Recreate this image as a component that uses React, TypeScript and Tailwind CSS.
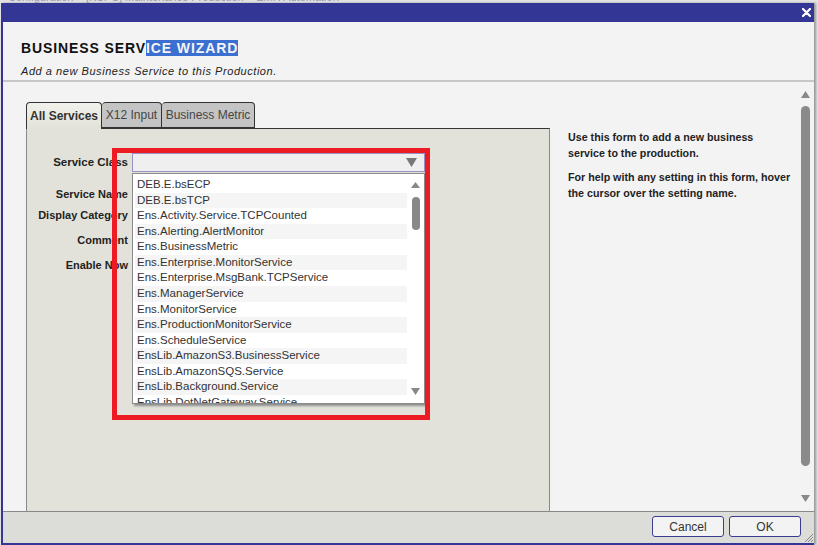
const services = [
  "DEB.E.bsECP",
  "DEB.E.bsTCP",
  "Ens.Activity.Service.TCPCounted",
  "Ens.Alerting.AlertMonitor",
  "Ens.BusinessMetric",
  "Ens.Enterprise.MonitorService",
  "Ens.Enterprise.MsgBank.TCPService",
  "Ens.ManagerService",
  "Ens.MonitorService",
  "Ens.ProductionMonitorService",
  "Ens.ScheduleService",
  "EnsLib.AmazonS3.BusinessService",
  "EnsLib.AmazonSQS.Service",
  "EnsLib.Background.Service",
  "EnsLib.DotNetGateway.Service",
];

function Arrow({ up, w, h, color }: { up?: boolean; w: number; h: number; color: string }) {
  return (
    <svg width={w} height={h} viewBox={`0 0 ${w} ${h}`} className="block">
      <polygon points={up ? `0,${h} ${w / 2},0 ${w},${h}` : `0,0 ${w},0 ${w / 2},${h}`} fill={color} />
    </svg>
  );
}

export default function App() {
  return (
    <div className="w-[818px] h-[545px] bg-[#e2e2e2] overflow-hidden flex flex-col font-['Liberation_Sans',Arial,sans-serif]">
      {/* page behind the dialog, barely visible */}
      <div className="h-[3px] overflow-hidden pl-[8px]">
        <div className="-mt-[9px] text-[11px] leading-[12px] text-[#8f9bb8] whitespace-nowrap">
          Configuration &gt; [KSPC] Maintenance Production &gt; EMR Automation
        </div>
      </div>

      <div className="ml-[1px] w-[813px] flex-1 flex flex-col bg-[#f3f3f3] border-l-2 border-b-2 border-[#333694] shadow-[2px_0_2px_#9a9a9a]">
        {/* title bar */}
        <div className="h-[19px] bg-[#333694] flex items-center justify-end pr-[3px]">
          <svg width="9" height="9" viewBox="0 0 9 9">
            <path d="M1 1 L8 8 M8 1 L1 8" stroke="#fff" strokeWidth="2.2" strokeLinecap="round" />
          </svg>
        </div>

        {/* header */}
        <div className="h-[58px] pt-[18px] pl-[18px]">
          <div className="text-[14px] leading-[16px] font-bold tracking-[0.9px] text-[#111] whitespace-nowrap">
            BUSINESS SERV<span className="bg-[#3b6fd0] text-[#f4f4f4]">ICE WIZARD</span>
          </div>
          <div className="mt-[9px] text-[11px] leading-[13px] italic tracking-[0.55px] text-[#222]">
            Add a new Business Service to this Production.
          </div>
        </div>
        <div className="h-[2px] bg-[#c6c6c6]" />

        {/* body */}
        <div className="flex-1 flex min-h-0">
          <div className="w-[547px] pl-[23px] pt-[19px] flex flex-col">
            <div className="h-[27px] flex items-end text-[12px]">
              <div className="h-[27px] w-[76px] border border-b-0 border-[#333] rounded-t-[4px] bg-gradient-to-b from-[#f2f2ec] to-[#e2e2da] font-bold text-[#333] flex items-center justify-center relative z-10 -mb-px">
                All Services
              </div>
              <div className="h-[26px] w-[60px] border border-l-0 border-[#333] rounded-t-[4px] bg-[#c4c4c4] text-[#444] flex items-center justify-center">
                X12 Input
              </div>
              <div className="h-[26px] w-[93px] border border-l-0 border-[#333] rounded-t-[4px] bg-[#c4c4c4] text-[#444] flex items-center justify-center">
                Business Metric
              </div>
            </div>

            <div className="flex-1 w-[524px] bg-[#e2e2da] border-t border-t-[#333] border-x border-x-[#888] relative">
              <div className="pt-[24px]">
                <div className="flex items-center">
                  <div className="w-[101px] text-right text-[11.5px] font-bold text-[#222]">Service Class</div>
                  <div className="ml-[4px] w-[293px] h-[19px] border border-[#9393c4] bg-[#efefef] relative flex items-center justify-end pr-[7px]">
                    <Arrow w={11} h={9} color="#777" />
                    <div className="absolute left-[-1px] top-[19px] w-[293px] h-[231px] bg-white border border-[#8a8a8a] shadow-[2px_2px_2px_#8f8f8f] overflow-hidden flex z-10">
                      <div className="w-[274px] pl-[2px] pt-[3px] shrink-0">
                        {services.map((s, i) => (
                          <div
                            key={s}
                            className={`h-[15.57px] leading-[15.57px] text-[11.5px] text-[#333] pl-[2px] whitespace-nowrap ${i % 2 === 1 ? "bg-[#f5f5f5]" : ""}`}
                          >
                            {s}
                          </div>
                        ))}
                      </div>
                      <div className="flex-1 flex flex-col items-center pt-[8px] pb-[8px]">
                        <Arrow up w={9} h={6} color="#888" />
                        <div className="mt-[9px] w-[8px] h-[33px] rounded-full bg-[#888]" />
                        <div className="flex-1" />
                        <Arrow w={9} h={7} color="#888" />
                      </div>
                    </div>
                  </div>
                </div>

                <div className="w-[101px] text-right text-[11px] leading-[14px] font-bold text-[#222]">
                  <div className="mt-[15px]">Service Name</div>
                  <div className="mt-[7px]">Display Category</div>
                  <div className="mt-[11px]">Comment</div>
                  <div className="mt-[11px]">Enable Now</div>
                </div>
              </div>

              {/* annotation */}
              <div className="absolute left-[85px] top-[19px] w-[318px] h-[272px] border-[5px] border-[#ed1c24] z-20 pointer-events-none" />
            </div>
          </div>

          <div className="flex-1 pl-[18px] pt-[47px] text-[10.7px] leading-[16px] font-bold text-[#222] whitespace-nowrap">
            <p>
              Use this form to add a new business
              <br />
              service to the production.
            </p>
            <p className="mt-[8px]">
              For help with any setting in this form, hover
              <br />
              the cursor over the setting name.
            </p>
          </div>

          <div className="w-[13px] flex flex-col items-start pt-[9px] pb-[9px]">
            <Arrow up w={9} h={7} color="#888" />
            <div className="mt-[8px] w-[9px] h-[360px] rounded-full bg-[#8a8a8a]" />
            <div className="flex-1" />
            <Arrow w={9} h={7} color="#888" />
          </div>
        </div>

        {/* footer */}
        <div className="h-[32px] bg-[#dcdcd8] border-t border-[#888] flex justify-end items-start pt-[4px] pr-[13px] gap-[5px] relative">
          <button className="w-[72px] h-[21px] border border-[#3b3b8f] rounded-[3px] bg-[#f3f3f3] text-[12px] text-[#333]">
            Cancel
          </button>
          <button className="w-[72px] h-[21px] border border-[#3b3b8f] rounded-[3px] bg-[#f3f3f3] text-[12px] text-[#333]">
            OK
          </button>
          <svg width="9" height="9" viewBox="0 0 9 9" className="absolute right-[1px] bottom-[1px]">
            <path d="M9 1 L1 9 M9 4 L4 9 M9 7 L7 9" stroke="#888" strokeWidth="1" />
          </svg>
        </div>
      </div>
    </div>
  );
}
